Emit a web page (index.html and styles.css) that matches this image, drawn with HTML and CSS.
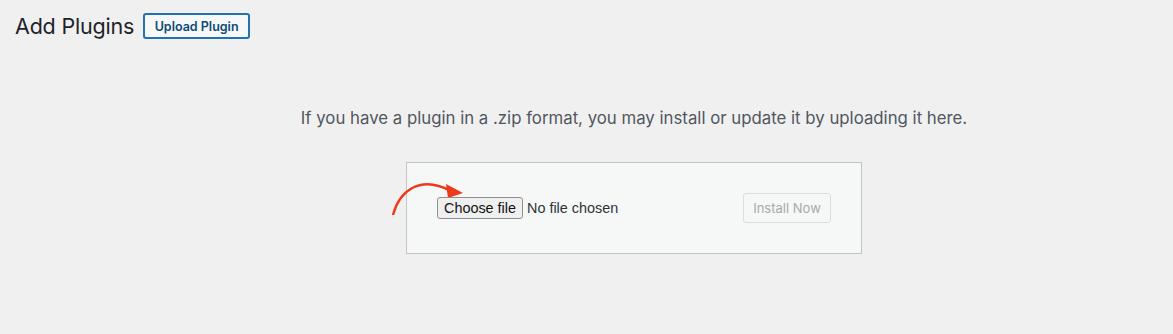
FILE: index.html
```html
<!DOCTYPE html>
<html>
<head>
<meta charset="utf-8">
<link rel="stylesheet" href="styles.css">
</head>
<body>
<div class="wrap">
  <div class="header">
    <h1 class="title">Add Plugins</h1>
    <button class="upload-btn">Upload Plugin</button>
  </div>
  <section class="upload">
    <p class="help">If you have a plugin in a .zip format, you may install or update it by uploading it here.</p>
    <div class="form-row">
      <svg class="arrow" width="80" height="45" viewBox="0 0 80 45">
        <path d="M8 45 C 14 22, 34 4, 66 21" fill="none" stroke="#ee3a1c" stroke-width="2.4" stroke-linecap="round"/>
        <polygon points="78,23 61,14 63,28" fill="#ee3a1c"/>
      </svg>
      <form class="form">
        <div class="file">
          <span class="choose">Choose file</span>
          <span class="nofile">No file chosen</span>
        </div>
        <span class="install">Install Now</span>
      </form>
    </div>
  </section>
</div>
</body>
</html>
```
FILE: styles.css
```css
html, body {
  margin: 0;
  padding: 0;
  background: #f0f0f1;
  font-family: "Inter", "Liberation Sans", sans-serif;
  color: #1d2327;
}
.wrap {
  padding: 11px 0 0 15px;
}
.header {
  display: flex;
  align-items: center;
  gap: 9px;
}
.title {
  margin: 0;
  font-size: 21.5px;
  font-weight: 400;
  line-height: 30px;
  letter-spacing: -0.2px;
}
.upload-btn {
  box-sizing: border-box;
  height: 26px;
  width: 107px;
  padding: 0;
  border: 2px solid #2271b1;
  border-radius: 3px;
  background: #f6f7f7;
  color: #0a4b78;
  font-family: inherit;
  font-size: 12.5px;
  font-weight: 600;
}
.upload {
  margin-left: 80px;
  display: flex;
  flex-direction: column;
  align-items: center;
}
.help {
  margin: 64px 0 0 0;
  font-size: 16.8px;
  line-height: 26px;
  color: #50575e;
}
.form-row {
  margin-top: 31px;
  position: relative;
}
.arrow {
  position: absolute;
  left: -21px;
  top: 8px;
}
.form {
  box-sizing: border-box;
  width: 456px;
  height: 92px;
  padding: 30px;
  border: 1px solid #c3c4c7;
  background: #f6f7f7;
  display: flex;
  align-items: center;
  justify-content: space-between;
}
.file {
  display: flex;
  align-items: center;
  gap: 4px;
  font-family: "Liberation Sans", Arial, sans-serif;
  font-size: 14.4px;
}
.choose {
  box-sizing: border-box;
  height: 22px;
  width: 86px;
  border: 1px solid #8f8f8f;
  border-radius: 3px;
  background: #efefef;
  color: #111;
  font-size: 14.4px;
  display: flex;
  align-items: center;
  justify-content: center;
  position: relative;
  z-index: 1;
}
.nofile {
  color: #2c3338;
}
.install {
  box-sizing: border-box;
  width: 88px;
  height: 30px;
  border: 1px solid #dcdcde;
  border-radius: 3px;
  background: #f6f7f7;
  color: #a7aaad;
  font-size: 13px;
  display: flex;
  align-items: center;
  justify-content: center;
}
```
